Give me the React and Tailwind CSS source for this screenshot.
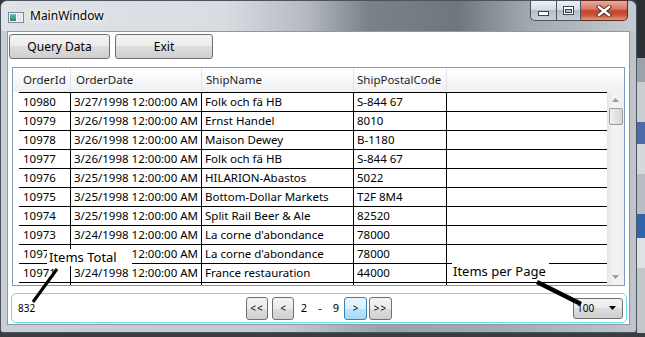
import React from "react";

const rows = [
  ["10980", "3/27/1998 12:00:00 AM", "Folk och fä HB", "S-844 67"],
  ["10979", "3/26/1998 12:00:00 AM", "Ernst Handel", "8010"],
  ["10978", "3/26/1998 12:00:00 AM", "Maison Dewey", "B-1180"],
  ["10977", "3/26/1998 12:00:00 AM", "Folk och fä HB", "S-844 67"],
  ["10976", "3/25/1998 12:00:00 AM", "HILARION-Abastos", "5022"],
  ["10975", "3/25/1998 12:00:00 AM", "Bottom-Dollar Markets", "T2F 8M4"],
  ["10974", "3/25/1998 12:00:00 AM", "Split Rail Beer & Ale", "82520"],
  ["10973", "3/24/1998 12:00:00 AM", "La corne d'abondance", "78000"],
  ["10972", "3/24/1998 12:00:00 AM", "La corne d'abondance", "78000"],
  ["10971", "3/24/1998 12:00:00 AM", "France restauration", "44000"],
  ["r11", "", "", ""],
];

const aero =
  "border border-[#707070] rounded-[3px] bg-[linear-gradient(to_bottom,#f3f3f3_0%,#ebebeb_50%,#dddddd_50%,#cfcfcf_100%)]";
const aeroHot =
  "border border-[#3c7fb1] rounded-[3px] bg-[linear-gradient(to_bottom,#eaf6fd_0%,#d9f0fc_50%,#bee6fd_50%,#a7d9f5_100%)]";

function WinIcon() {
  return (
    <svg width="16" height="11" viewBox="0 0 16 11">
      <defs>
        <linearGradient id="wi" x1="0" y1="0" x2="0" y2="1">
          <stop offset="0" stopColor="#6fb7c9" />
          <stop offset="1" stopColor="#2f8a5a" />
        </linearGradient>
      </defs>
      <rect x="0.5" y="0.5" width="15" height="10" fill="#f4f6f8" stroke="#7a8896" />
      <rect x="2" y="2" width="6" height="7" fill="url(#wi)" />
      <rect x="9" y="2" width="5" height="7" fill="#e2e6ea" />
    </svg>
  );
}

export default function App() {
  return (
    <div className="relative w-[645px] h-[337px] overflow-hidden bg-[#34383d] font-['Noto_Sans',sans-serif] text-black">
      <div className="flex h-[333px]">
        {/* Window */}
        <div className="w-[637px] h-[333px] flex flex-col rounded-t-[7px] rounded-b-[3px] border border-[#4b545e] bg-[linear-gradient(to_right,#c9cfd5_0%,#c3c9cf_45%,#9aa1a8_60%,#a4abb2_80%,#bfc5cb_100%)]">
          {/* Title bar */}
          <div className="h-[30px] flex items-start rounded-t-[7px] bg-[linear-gradient(to_right,#dfe3e7_0%,#d8dde2_35%,#b4bac0_48%,#7a8188_58%,#6f767d_72%,#9ea5ac_82%,#c6ccd2_100%)]">
            <div className="ml-[7px] mt-[11px]">
              <WinIcon />
            </div>
            <div className="ml-[6px] mt-[7px] text-[12px] leading-[16px] text-black [text-shadow:0_0_6px_#ffffff,0_0_3px_#ffffff]">
              MainWindow
            </div>
            <div className="ml-auto mr-[8px] flex h-[21px] -mt-px">
              <div className="w-[26px] h-full border border-[#4a5563] border-r-0 rounded-bl-[5px] bg-[linear-gradient(to_bottom,#eef1f4_0%,#d7dce2_45%,#b6bfc9_50%,#c9d0d8_100%)] flex items-center justify-center">
                <svg width="11" height="5" viewBox="0 0 11 5" className="mt-[5px]">
                  <rect x="0.5" y="0.5" width="10" height="4" fill="#ffffff" stroke="#3b4450" />
                </svg>
              </div>
              <div className="w-[25px] h-full border border-[#4a5563] bg-[linear-gradient(to_bottom,#eef1f4_0%,#d7dce2_45%,#b6bfc9_50%,#c9d0d8_100%)] flex items-center justify-center">
                <svg width="11" height="9" viewBox="0 0 11 9">
                  <rect x="0.5" y="0.5" width="10" height="8" fill="#ffffff" stroke="#3b4450" />
                  <rect x="2.5" y="3.5" width="6" height="3" fill="#b9c1ca" stroke="#3b4450" />
                </svg>
              </div>
              <div className="w-[47px] h-full border border-[#5a2a22] border-l-0 rounded-br-[5px] bg-[linear-gradient(to_bottom,#eaa999_0%,#da7c66_40%,#c5432c_52%,#c9553c_75%,#e39a7f_100%)] flex items-center justify-center">
                <svg width="16" height="12" viewBox="0 0 16 12">
                  <path d="M3 2 L13 10 M13 2 L3 10" stroke="#4a2a24" strokeWidth="4.2" strokeLinecap="square" />
                  <path d="M3 2 L13 10 M13 2 L3 10" stroke="#ffffff" strokeWidth="2.4" strokeLinecap="square" />
                </svg>
              </div>
            </div>
          </div>

          {/* Client area */}
          <div className="ml-[6px] w-[623px] h-[294px] border border-[#8d98a4] bg-white flex flex-col">
            {/* Toolbar */}
            <div className="ml-[1px] mt-[2px] flex gap-[5px]">
              <button className={`w-[101px] h-[25px] text-[12px] ${aero}`}>Query Data</button>
              <button className={`w-[98px] h-[25px] text-[12px] ${aero}`}>Exit</button>
            </div>

            {/* DataGrid */}
            <div className="ml-[4px] mt-[8px] w-[613px] h-[219px] border border-[#7e9cbf] flex flex-col text-[11.5px]">
              {/* Header */}
              <div className="h-[24px] flex bg-[linear-gradient(to_bottom,#ffffff_0%,#f7f8f9_50%,#eef0f2_100%)] text-[#1e1e1e]">
                <div className="w-[6px]" />
                <div className="w-[52px] pl-[4px] flex items-center border-r border-[#e0e2e5]">OrderId</div>
                <div className="w-[131px] pl-[5px] flex items-center border-r border-[#e0e2e5]">OrderDate</div>
                <div className="w-[152px] pl-[4px] flex items-center border-r border-[#e0e2e5]">ShipName</div>
                <div className="w-[93px] pl-[3px] flex items-center border-r border-[#e0e2e5]">ShipPostalCode</div>
                <div className="flex-1" />
              </div>
              {/* Body */}
              <div className="flex h-[193px]">
                <div className="w-[594px] overflow-hidden flex">
                  <div className="w-[6px]" />
                  <div className="w-[588px] flex flex-col border-t border-black">
                    {rows.map((r) => (
                      <div key={r[0]} className="h-[19px] shrink-0 flex border-b border-black">
                        <div className="w-[52px] pl-[4px] flex items-center border-r border-black whitespace-nowrap">{r[0] === "r11" ? "" : r[0]}</div>
                        <div className="w-[131px] pl-[3px] flex items-center border-r border-black whitespace-nowrap">{r[1]}</div>
                        <div className="w-[152px] pl-[3px] flex items-center border-r border-black whitespace-nowrap">{r[2]}</div>
                        <div className="w-[93px] pl-[3px] flex items-center border-r border-black whitespace-nowrap">{r[3]}</div>
                        <div className="flex-1" />
                      </div>
                    ))}
                  </div>
                </div>
                {/* Scrollbar */}
                <div className="w-[17px] flex flex-col items-center bg-[linear-gradient(to_right,#e6e6e6,#f4f4f4_40%,#f0f0f0)]">
                  <div className="h-[16px] flex items-center justify-center">
                    <svg width="7" height="4" viewBox="0 0 7 4">
                      <path d="M0 4 L3.5 0 L7 4 Z" fill="#9a9a9a" />
                    </svg>
                  </div>
                  <div className="w-[14px] h-[17px] rounded-[2px] border border-[#9a9a9a] bg-[linear-gradient(to_right,#f2f2f2,#e2e2e2_50%,#d6d6d6)]" />
                  <div className="flex-1" />
                  <div className="h-[16px] flex items-center justify-center">
                    <svg width="7" height="4" viewBox="0 0 7 4">
                      <path d="M0 0 L3.5 4 L7 0 Z" fill="#9a9a9a" />
                    </svg>
                  </div>
                </div>
              </div>
            </div>

            {/* Pager */}
            <div className="ml-[3px] mt-[7px] w-[616px] h-[30px] rounded-[5px] border border-[#6ad9e8] grid grid-cols-[1fr_auto_1fr] items-center">
              <div className="pl-[6px] text-[10px] leading-none">832</div>
              <div className="flex items-center">
                <button className={`w-[22px] h-[23px] text-[10px] tracking-[1px] flex items-center justify-center ${aero}`}>&lt;&lt;</button>
                <button className={`ml-[4px] w-[22px] h-[23px] text-[10px] flex items-center justify-center ${aero}`}>&lt;</button>
                <div className="w-[50px] pl-[2px] flex text-[11px]">
                  <span className="w-[16px] text-center">2</span>
                  <span className="w-[16px] text-center">-</span>
                  <span className="w-[16px] text-center">9</span>
                </div>
                <button className={`w-[23px] h-[23px] text-[10px] flex items-center justify-center ${aeroHot}`}>&gt;</button>
                <button className={`ml-[2px] w-[23px] h-[23px] text-[10px] tracking-[1px] flex items-center justify-center ${aero}`}>&gt;&gt;</button>
              </div>
              <div className="flex justify-end pr-[3px]">
                <div className={`w-[50px] h-[21px] flex items-center pl-[3px] pr-[6px] text-[10px] ${aero}`}>
                  <span>100</span>
                  <svg width="7" height="4" viewBox="0 0 7 4" className="ml-auto">
                    <path d="M0 0 L3.5 4 L7 0 Z" fill="#000000" />
                  </svg>
                </div>
              </div>
            </div>
          </div>
        </div>

        {/* Desktop strip on the right */}
        <div className="flex-1 flex flex-col">
          <div className="h-[58px] bg-[#2c3035]" />
          <div className="h-[24px] bg-[#9ba2a9]" />
          <div className="h-[40px] bg-[#c9ced3]" />
          <div className="h-[22px] bg-[#4a6aa8]" />
          <div className="h-[30px] bg-[#d5d9dd]" />
          <div className="h-[40px] bg-[#b7bdc3]" />
          <div className="h-[24px] bg-[#2f63ae]" />
          <div className="h-[30px] bg-[#dfe2e5]" />
          <div className="flex-1 bg-[#c2c7cc]" />
        </div>
      </div>
      <div className="h-[4px] bg-[#3a3d41]" />

      {/* Annotations */}
      <div className="absolute left-[47px] top-[249px] w-[85px] h-[17px] bg-white pl-[2px] text-[13px] leading-[17px]">
        Items Total
      </div>
      <div className="absolute left-[452px] top-[262px] w-[97px] h-[19px] bg-white pl-[1px] text-[13px] leading-[19px]">
        Items per Page
      </div>
      <svg className="absolute left-0 top-0 pointer-events-none" width="645" height="337">
        <line x1="57" y1="269" x2="33" y2="302" stroke="#000" strokeWidth="3" />
        <line x1="537" y1="282" x2="581" y2="304" stroke="#000" strokeWidth="4.5" />
      </svg>
    </div>
  );
}
